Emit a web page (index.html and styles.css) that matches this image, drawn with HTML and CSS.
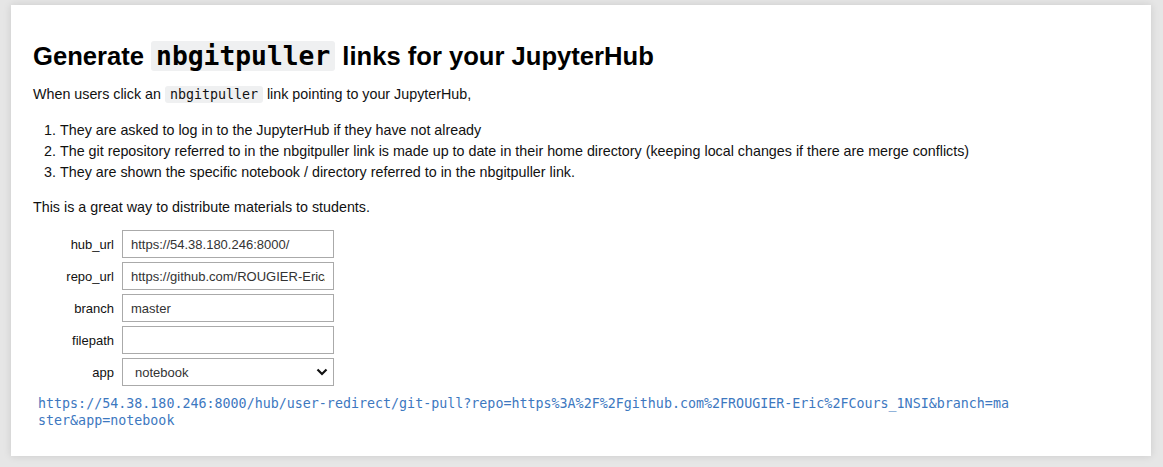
FILE: index.html
```html
<!DOCTYPE html>
<html>
<head>
<meta charset="utf-8">
<link rel="stylesheet" href="styles.css">
</head>
<body>
<div class="card">
  <h1 class="title">Generate <code class="code-h">nbgitpuller</code> links for your JupyterHub</h1>
  <p class="intro">When users click an <code class="code-p">nbgitpuller</code> link pointing to your JupyterHub,</p>
  <ol class="steps">
    <li>They are asked to log in to the JupyterHub if they have not already</li>
    <li>The git repository referred to in the nbgitpuller link is made up to date in their home directory (keeping local changes if there are merge conflicts)</li>
    <li>They are shown the specific notebook / directory referred to in the nbgitpuller link.</li>
  </ol>
  <p class="intro">This is a great way to distribute materials to students.</p>
  <form class="form">
    <label class="lbl" for="hub">hub_url</label>
    <input class="field" id="hub" type="text" value="https://54.38.180.246:8000/">
    <label class="lbl" for="repo">repo_url</label>
    <input class="field" id="repo" type="text" value="https://github.com/ROUGIER-Eric/Cours_1NSI">
    <label class="lbl" for="branch">branch</label>
    <input class="field" id="branch" type="text" value="master">
    <label class="lbl" for="fp">filepath</label>
    <input class="field" id="fp" type="text" value="">
    <label class="lbl" for="app">app</label>
    <div class="select-wrap">
      <select class="sel" id="app"><option>notebook</option></select>
      <svg class="chev" width="12" height="8" viewBox="0 0 12 8"><path d="M1.5 1.5 L6 6 L10.5 1.5" fill="none" stroke="#111" stroke-width="2.2"/></svg>
    </div>
  </form>
  <div class="link">https://54.38.180.246:8000/hub/user-redirect/git-pull?repo=https%3A%2F%2Fgithub.com%2FROUGIER-Eric%2FCours_1NSI&amp;branch=master&amp;app=notebook</div>
</div>
</body>
</html>
```
FILE: styles.css
```css
html, body { margin: 0; padding: 0; }
body {
  background: #e6e6e6;
  font-family: "Liberation Sans", Arial, sans-serif;
  color: #111;
  padding: 5px 12px 11px 11px;
}
.card {
  background: #fff;
  box-shadow: 0 0 8px rgba(0,0,0,0.12);
  padding: 33px 22px 27px 22px;
  box-sizing: border-box;
  height: 451px;
}
.title {
  margin: 0 0 10px 0;
  font-size: 25.6px;
  font-weight: bold;
  line-height: 36px;
  color: #000;
}
.code-h {
  font-family: "DejaVu Sans Mono", monospace;
  font-size: 26.3px;
  font-weight: bold;
  background: #eff0f1;
  padding: 0 5px;
  border-radius: 3px;
}
.intro {
  margin: 0;
  font-size: 14.3px;
  line-height: 20px;
}
.code-p {
  font-family: "DejaVu Sans Mono", monospace;
  font-size: 13.3px;
  background: #eff0f1;
  padding: 1px 5px;
  border-radius: 3px;
}
.steps {
  margin: 15px 0 14px 0;
  padding-left: 27px;
  font-size: 14.3px;
  line-height: 21px;
}
.form {
  display: grid;
  grid-template-columns: 81px 212px;
  column-gap: 8px;
  row-gap: 4px;
  margin-top: 13px;
  align-items: center;
}
.lbl {
  text-align: right;
  font-size: 13px;
  color: #111;
}
.field, .sel {
  box-sizing: border-box;
  height: 28px;
  width: 212px;
  border: 1px solid #aaa;
  font-family: "Liberation Sans", Arial, sans-serif;
  font-size: 13px;
  color: #333;
  padding: 0 8px;
  margin: 0;
  background: #fff;
  border-radius: 0;
}
.select-wrap { position: relative; width: 212px; height: 28px; }
.sel {
  appearance: none;
  -webkit-appearance: none;
  padding-left: 12px;
}
.chev { position: absolute; right: 6px; top: 10px; pointer-events: none; }
.link {
  margin-top: 9px;
  margin-left: 5px;
  width: 121ch;
  font-family: "DejaVu Sans Mono", monospace;
  font-size: 13.33px;
  line-height: 17px;
  color: #3d78bf;
  word-break: break-all;
}
```
